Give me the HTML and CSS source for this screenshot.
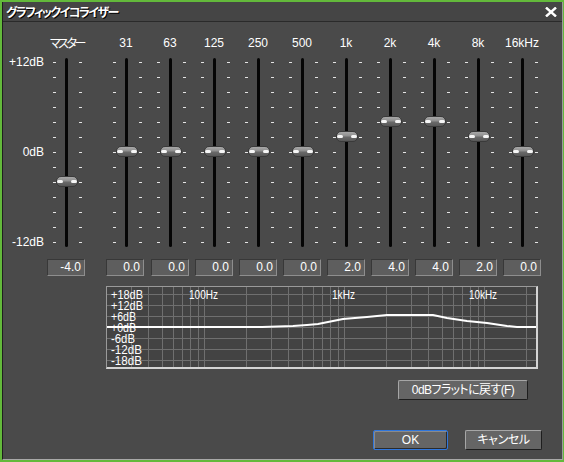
FILE: index.html
```html
<!DOCTYPE html>
<html lang="ja">
<head>
<meta charset="utf-8">
<title>グラフィックイコライザー</title>
<link rel="stylesheet" href="styles.css">
</head>
<body>
<div class="window">
  <div class="frame">
    <div class="titlebar">
      <span class="title">グラフィックイコライザー</span>
      <span class="close"><svg width="12" height="10" viewBox="0 0 12 10"><path d="M1 0.5 L11 9.5 M11 0.5 L1 9.5" stroke="#fff" stroke-width="2.4"/></svg></span>
    </div>
    <div class="content">
      <div class="eq">
        <div class="scale"><span>+12dB</span><span>0dB</span><span>-12dB</span></div>
        <div class="band">
          <div class="band-label master-label">マスター</div>
          <div class="slider"><div class="track"></div><div class="thumb" style="top:121px"></div></div>
          <div class="value">-4.0</div>
        </div>
        <div class="bands">
          <div class="band"><div class="band-label">31</div><div class="slider"><div class="track"></div><div class="thumb" style="top:91px"></div></div><div class="value">0.0</div></div>
          <div class="band"><div class="band-label">63</div><div class="slider"><div class="track"></div><div class="thumb" style="top:91px"></div></div><div class="value">0.0</div></div>
          <div class="band"><div class="band-label">125</div><div class="slider"><div class="track"></div><div class="thumb" style="top:91px"></div></div><div class="value">0.0</div></div>
          <div class="band"><div class="band-label">250</div><div class="slider"><div class="track"></div><div class="thumb" style="top:91px"></div></div><div class="value">0.0</div></div>
          <div class="band"><div class="band-label">500</div><div class="slider"><div class="track"></div><div class="thumb" style="top:91px"></div></div><div class="value">0.0</div></div>
          <div class="band"><div class="band-label">1k</div><div class="slider"><div class="track"></div><div class="thumb" style="top:76px"></div></div><div class="value">2.0</div></div>
          <div class="band"><div class="band-label">2k</div><div class="slider"><div class="track"></div><div class="thumb" style="top:61px"></div></div><div class="value">4.0</div></div>
          <div class="band"><div class="band-label">4k</div><div class="slider"><div class="track"></div><div class="thumb" style="top:61px"></div></div><div class="value">4.0</div></div>
          <div class="band"><div class="band-label">8k</div><div class="slider"><div class="track"></div><div class="thumb" style="top:76px"></div></div><div class="value">2.0</div></div>
          <div class="band"><div class="band-label">16kHz</div><div class="slider"><div class="track"></div><div class="thumb" style="top:91px"></div></div><div class="value">0.0</div></div>
        </div>
      </div>
      <div class="graph">
        <svg width="429" height="80" viewBox="0 0 429 80">
          <g stroke="#6f6f6f" stroke-width="1" shape-rendering="crispEdges">
            <path d="M0 7.5H429M0 18.5H429M0 29.5H429M0 40.5H429M0 51.5H429M0 62.5H429M0 73.5H429"/>
            <path d="M24.5 0V80M41.5 0V80M55.5 0V80M66.5 0V80M75.5 0V80M83.5 0V80M91.5 0V80M97.5 0V80M139.5 0V80M164.5 0V80M181.5 0V80M195.5 0V80M206.5 0V80M215.5 0V80M223.5 0V80M231.5 0V80M237.5 0V80M279.5 0V80M304.5 0V80M321.5 0V80M335.5 0V80M346.5 0V80M355.5 0V80M363.5 0V80M371.5 0V80M377.5 0V80M419.5 0V80"/>
          </g>
          <g class="glabel" fill="#fff">
            <text x="4" y="7.5" textLength="32" lengthAdjust="spacingAndGlyphs">+18dB</text>
            <text x="4" y="18.5" textLength="32" lengthAdjust="spacingAndGlyphs">+12dB</text>
            <text x="4" y="29.5" textLength="25" lengthAdjust="spacingAndGlyphs">+6dB</text>
            <text x="4" y="40.5" textLength="25" lengthAdjust="spacingAndGlyphs">+0dB</text>
            <text x="4" y="51.5" textLength="24" lengthAdjust="spacingAndGlyphs">-6dB</text>
            <text x="4" y="62.5" textLength="31" lengthAdjust="spacingAndGlyphs">-12dB</text>
            <text x="4" y="73.5" textLength="31" lengthAdjust="spacingAndGlyphs">-18dB</text>
            <text x="82" y="7.5" textLength="29" lengthAdjust="spacingAndGlyphs">100Hz</text>
            <text x="225" y="7.5" textLength="23" lengthAdjust="spacingAndGlyphs">1kHz</text>
            <text x="362" y="7.5" textLength="28" lengthAdjust="spacingAndGlyphs">10kHz</text>
          </g>
          <polyline fill="none" stroke="#fff" stroke-width="2" points="0,40 155,40 186,39 200,38 211,37 236,32 260,30 280,28 326,28 340,31 360,34 380,36 400,39 410,40 429,40"/>
        </svg>
      </div>
      <div class="flat-row"><button class="btn flat">0dBフラットに戻す(F)</button></div>
      <div class="actions"><button class="btn ok">OK</button><button class="btn cancel">キャンセル</button></div>
    </div>
  </div>
</div>
</body>
</html>
```
FILE: styles.css
```css
html, body {
  margin: 0;
  padding: 0;
  background: #4a4a4a;
}
body {
  font-family: "Liberation Sans", "Noto Sans CJK JP", sans-serif;
  font-size: 12px;
  color: #fff;
  font-feature-settings: "palt";
}
.window {
  width: 564px;
  height: 462px;
  box-sizing: border-box;
  border: 2px solid #63b93b;
  border-right-width: 1px;
  background: #4a4a4a;
}
.frame {
  height: 100%;
  box-sizing: border-box;
  border-left: 1px solid #1e1e1e;
  border-right: 1px solid #9c9c9c;
  border-bottom: 1px solid #a8a8a8;
  display: flex;
  flex-direction: column;
}
.titlebar {
  height: 19px;
  border-bottom: 1px solid #2a2a2a;
  background: #454545;
  display: flex;
  align-items: center;
  justify-content: space-between;
  padding: 0 5px 0 3px;
}
.title {
  font-family: "Noto Sans CJK JP", sans-serif;
  font-weight: bold;
  font-size: 12px;
  letter-spacing: -1.6px;
  line-height: 19px;
  color: #fff;
  text-shadow: 1px 1px 0 #000;
}
.close {
  display: flex;
  width: 12px;
  height: 10px;
}
.content {
  padding-top: 14px;
  flex: 1;
}
.eq {
  display: flex;
}
.scale {
  width: 41px;
  height: 195px;
  margin-top: 19px;
  display: flex;
  flex-direction: column;
  justify-content: space-between;
  align-items: flex-end;
}
.scale span {
  height: 15px;
  line-height: 15px;
}
.bands {
  display: flex;
  margin-left: 16px;
}
.band {
  width: 44px;
  display: flex;
  flex-direction: column;
}
.band-label {
  height: 14px;
  line-height: 14px;
  text-align: center;
  white-space: nowrap;
}
.master-label {
  font-family: "Noto Sans CJK JP", sans-serif;
  font-size: 12px;
  letter-spacing: -2.4px;
  padding-left: 2px;
}
.slider {
  position: relative;
  height: 195px;
  margin-top: 5px;
  background-image:
    repeating-linear-gradient(to bottom, transparent 0 7px, #e4e4e4 7px 8px, transparent 8px 15px),
    repeating-linear-gradient(to bottom, transparent 0 7px, #e4e4e4 7px 8px, transparent 8px 15px);
  background-size: 3px 195px, 3px 195px;
  background-position: 9px 0, 35px 0;
  background-repeat: no-repeat;
}
.track {
  position: absolute;
  left: 21px;
  top: 3px;
  width: 3px;
  height: 189px;
  background: #050505;
  border-radius: 2px;
}
.thumb {
  position: absolute;
  left: 12px;
  width: 22px;
  height: 11px;
  box-sizing: border-box;
  border: 1px solid #3a3a3a;
  border-radius: 5px;
  background: linear-gradient(to bottom, #a8a8a8 0, #8e8e8e 45%, #6a6a6a 55%, #585858 100%);
}
.thumb::before,
.thumb::after {
  content: "";
  position: absolute;
  top: 3px;
  width: 6px;
  height: 3px;
  border-radius: 2px;
  background: #f6f6f6;
}
.thumb::before { left: 0; }
.thumb::after { right: 0; }
.value {
  margin: 9px 0 0 3px;
  width: 38px;
  height: 17px;
  box-sizing: border-box;
  border: 1px solid;
  border-color: #383838 #8e8e8e #8e8e8e #383838;
  background: #5e5e5e;
  text-align: right;
  padding-right: 3px;
  line-height: 15px;
}
.band:first-child > .value { margin-left: 2px; }
.graph {
  margin: 10px 0 0 103px;
  width: 432px;
  height: 83px;
  box-sizing: border-box;
  border-style: solid;
  border-width: 1px 2px 2px 1px;
  border-color: #9a9a9a #d4d4d4 #d4d4d4 #9a9a9a;
  background: #434343;
}
.graph svg {
  display: block;
}
.glabel text {
  font-family: "Liberation Sans", sans-serif;
  font-size: 12px;
  dominant-baseline: central;
}
.flat-row {
  margin: 11px 0 0 395px;
  display: flex;
}
.actions {
  margin: 30px 0 0 370px;
  display: flex;
  gap: 17px;
}
.btn {
  height: 20px;
  box-sizing: border-box;
  padding: 0;
  background: #656565;
  color: #fff;
  border: 1px solid;
  border-color: #a6a6a6 #1e1e1e #1e1e1e #a6a6a6;
  border-radius: 2px;
  font-family: "Liberation Sans", "Noto Sans CJK JP", sans-serif;
  font-size: 12px;
  font-feature-settings: "palt";
  line-height: 18px;
}
.flat {
  width: 130px;
  letter-spacing: -0.6px;
}
.ok {
  width: 75px;
  border: 1px solid #2f76dc;
  box-shadow: inset 1px 1px 0 #8a8a8a, inset -1px -1px 0 #2a2a2a;
}
.cancel {
  width: 77px;
  letter-spacing: -0.4px;
}
```
